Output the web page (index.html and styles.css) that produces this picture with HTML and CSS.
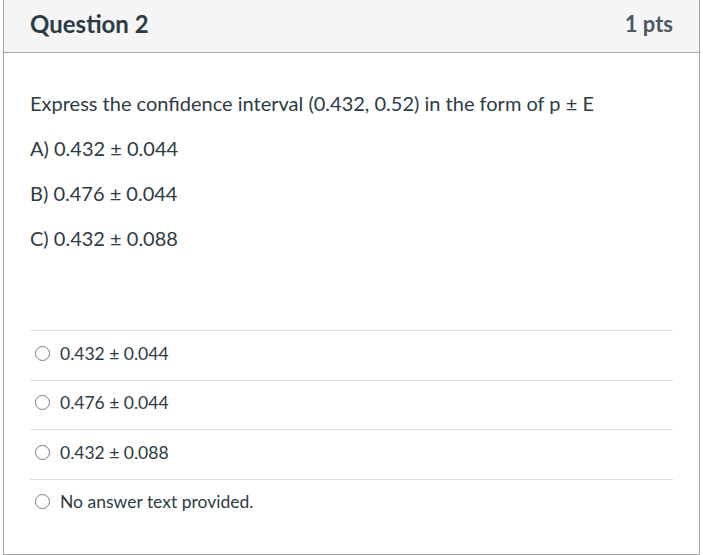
FILE: index.html
```html
<!DOCTYPE html>
<html>
<head>
<meta charset="utf-8">
<link rel="stylesheet" href="styles.css">
</head>
<body>
<div class="card">
  <div class="header">
    <span class="title">Question 2</span>
    <span class="pts">1 pts</span>
  </div>
  <div class="content">
    <div class="question-text">
      <p>Express the confidence interval (0.432, 0.52) in the form of p ± E</p>
      <p>A) 0.432 ± 0.044</p>
      <p>B) 0.476 ± 0.044</p>
      <p>C) 0.432 ± 0.088</p>
    </div>
    <div class="answers">
      <label class="answer"><span class="radio"></span><span class="answer-text">0.432 ± 0.044</span></label>
      <label class="answer"><span class="radio"></span><span class="answer-text">0.476 ± 0.044</span></label>
      <label class="answer"><span class="radio"></span><span class="answer-text">0.432 ± 0.088</span></label>
      <label class="answer"><span class="radio"></span><span class="answer-text">No answer text provided.</span></label>
    </div>
  </div>
</div>
</body>
</html>
```

FILE: styles.css
```css
html, body {
  margin: 0;
  padding: 0;
  background: #ffffff;
}
body {
  font-family: Lato, "Noto Sans", sans-serif;
  color: #2d3b45;
}
.card {
  box-sizing: border-box;
  width: 697px;
  height: 556px;
  margin: -1px 0 0 3px;
  border: 1px solid #a5a5a5;
  display: flex;
  flex-direction: column;
}
.header {
  height: 53px;
  box-sizing: border-box;
  background: #f5f5f5;
  border-bottom: 1px solid #a5a5a5;
  display: flex;
  justify-content: space-between;
  align-items: center;
  padding: 0 26px 5px 26px;
}
.title {
  font-size: 24px;
  font-weight: 700;
}
.pts {
  font-size: 22px;
  font-weight: 700;
  color: #4a5964;
}
.content {
  padding: 37px 26px 0 26px;
}
.question-text p {
  margin: 0 0 18px 0;
  font-size: 20px;
  line-height: 27px;
}
.answers {
  margin-top: 78px;
}
.answer {
  display: flex;
  align-items: center;
  height: 49.5px;
  box-sizing: border-box;
  border-top: 1px solid #dddddd;
  padding: 0 0 4px 5px;
}
.radio {
  width: 15px;
  height: 15px;
  box-sizing: border-box;
  border: 1px solid #7a7a7a;
  border-radius: 50%;
  margin-right: 10px;
  flex: none;
}
.answer-text {
  font-size: 17.5px;
}
```
